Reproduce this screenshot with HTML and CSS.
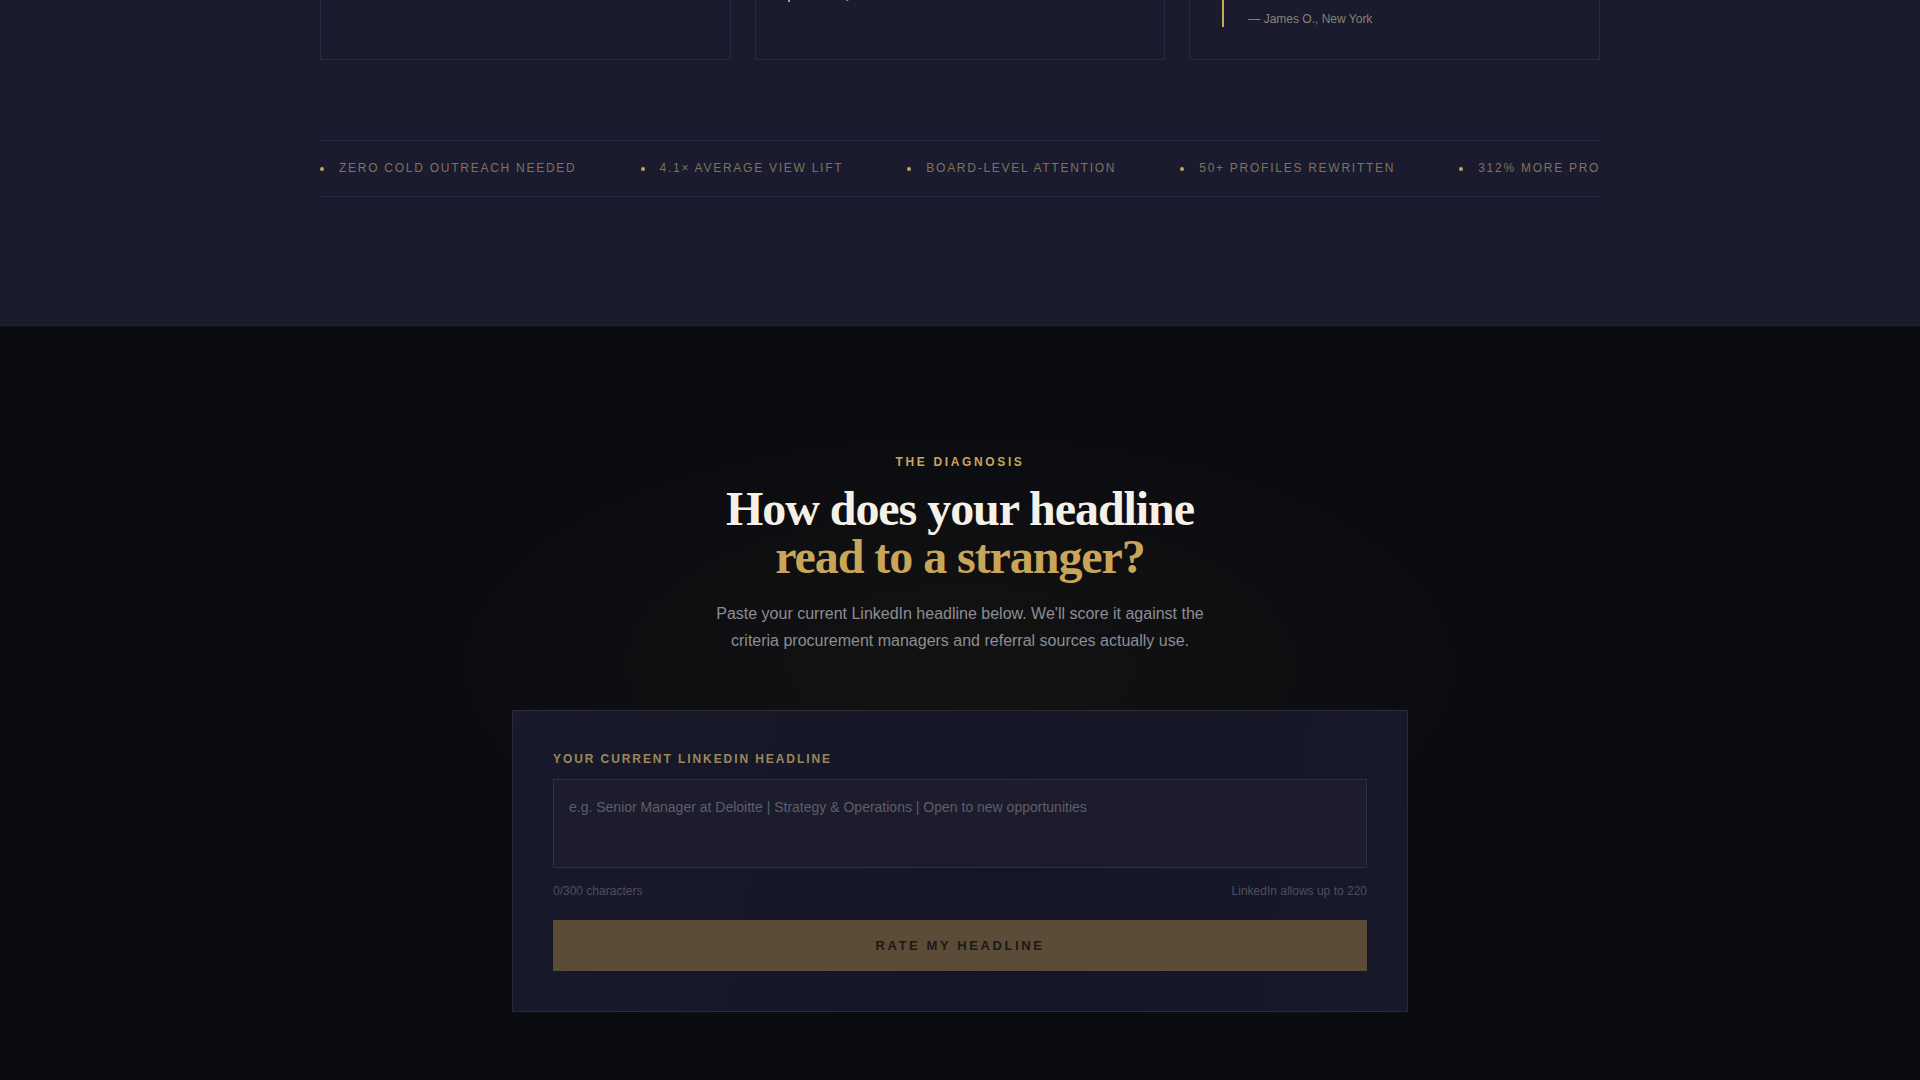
FILE: index.html
```html
<!DOCTYPE html>
<html lang="en">
<head>
<meta charset="utf-8">
<title>Headline Diagnosis</title>
<link rel="stylesheet" href="styles.css">
</head>
<body>
<section class="proof">
  <div class="container">
    <div class="cards">
      <article class="card">
        <blockquote class="quote">
          <p>Three inbound partner calls in the first<br>month. I had never had one before.</p>
          <cite>— Daniel K., Toronto</cite>
        </blockquote>
      </article>
      <article class="card">
        <blockquote class="quote">
          <p>Procurement teams finally understood<br>what I do before the first meeting.<br>That alone changed my pipeline.</p>
          <cite>— Maya R., London</cite>
        </blockquote>
      </article>
      <article class="card">
        <blockquote class="quote">
          <p>My old headline listed a job title.<br>The new one tells a stranger why<br>they should call me. Referrals<br>doubled within a quarter.</p>
          <cite>— James O., New York</cite>
        </blockquote>
      </article>
    </div>
    <div class="ticker">
      <div class="ticker-track">
        <span class="ticker-item"><span class="dot"></span>Zero cold outreach needed</span>
        <span class="ticker-item"><span class="dot"></span>4.1× average view lift</span>
        <span class="ticker-item"><span class="dot"></span>Board-level attention</span>
        <span class="ticker-item"><span class="dot"></span>50+ profiles rewritten</span>
        <span class="ticker-item"><span class="dot"></span>312% more profile visits</span>
        <span class="ticker-item"><span class="dot"></span>Zero cold outreach needed</span>
      </div>
    </div>
  </div>
</section>

<section class="diagnosis">
  <div class="diag-inner">
    <p class="eyebrow">The Diagnosis</p>
    <h2 class="diag-title">How does your headline<br><span class="gold">read to a stranger?</span></h2>
    <p class="diag-lead">Paste your current LinkedIn headline below. We'll score it against the criteria procurement managers and referral sources actually use.</p>

    <form class="diag-form">
      <label class="field-label" for="headline">Your current LinkedIn headline</label>
      <textarea id="headline" class="field-input" placeholder="e.g. Senior Manager at Deloitte | Strategy &amp; Operations | Open to new opportunities"></textarea>
      <div class="field-meta">
        <span>0/300 characters</span>
        <span>LinkedIn allows up to 220</span>
      </div>
      <button type="button" class="submit">Rate my headline</button>
    </form>
  </div>
</section>
</body>
</html>
```

FILE: styles.css
```css
* { box-sizing: border-box; }

html, body {
  margin: 0;
  padding: 0;
  background: #0b0c10;
  font-family: "Liberation Sans", Arial, sans-serif;
  overflow: hidden;
}

.proof {
  background: #1a1b2e;
  border-bottom: 1px solid #232238;
  padding-bottom: 128px;
}

.container {
  width: 1280px;
  margin: 0 auto;
}

.cards {
  display: grid;
  grid-template-columns: repeat(3, 1fr);
  gap: 24px;
  margin-top: -134px;
}

.card {
  background: #1a1b2e;
  border: 1px solid #28293e;
  padding: 32px;
}

.quote {
  margin: 0;
  border-left: 2px solid #c9a55a;
  padding-left: 24px;
}

.quote p {
  margin: 0 0 12px;
  font-family: "Liberation Serif", "Times New Roman", serif;
  font-style: italic;
  font-size: 15px;
  line-height: 25px;
  color: #d8d2c4;
}

.quote cite {
  display: block;
  font-style: normal;
  font-size: 12px;
  line-height: 16px;
  color: #8a826f;
}

.ticker {
  margin-top: 80px;
  border-top: 1px solid #25263b;
  border-bottom: 1px solid #25263b;
  padding: 19px 0;
  overflow: hidden;
}

.ticker-track {
  display: flex;
  gap: 64px;
  white-space: nowrap;
}

.ticker-item {
  display: flex;
  align-items: center;
  gap: 15px;
  flex-shrink: 0;
  font-size: 12px;
  line-height: 17px;
  letter-spacing: 0.145em;
  text-transform: uppercase;
  color: #7f735b;
}

.dot {
  width: 4px;
  height: 4px;
  border-radius: 50%;
  background: #c9a55a;
  flex-shrink: 0;
}

.diagnosis {
  background:
    radial-gradient(ellipse 520px 240px at 50% 340px, rgba(201, 165, 90, 0.045), rgba(201, 165, 90, 0) 100%),
    #0b0c10;
  padding: 128px 0 80px;
}

.diag-inner {
  display: flex;
  flex-direction: column;
  align-items: center;
  text-align: center;
}

.eyebrow {
  margin: 0;
  font-size: 12px;
  line-height: 16px;
  font-weight: 700;
  letter-spacing: 0.22em;
  text-transform: uppercase;
  color: #c9a55a;
}

.diag-title {
  margin: 15px 0 0;
  font-family: "Liberation Serif", "Times New Roman", serif;
  font-weight: 700;
  font-size: 48px;
  line-height: 48px;
  letter-spacing: -0.022em;
  color: #f6f1e7;
}

.gold { color: #c9a55a; }

.diag-lead {
  margin: 19px 0 0;
  max-width: 520px;
  font-size: 16px;
  line-height: 27px;
  color: #8d8d94;
}

.diag-form {
  margin-top: 56px;
  width: 896px;
  padding: 40px;
  border: 1px solid #2d2b36;
  background: linear-gradient(100deg, #18192b 0%, #141628 55%, #17182a 100%);
  text-align: left;
  display: flex;
  flex-direction: column;
}

.field-label {
  font-size: 12px;
  line-height: 16px;
  font-weight: 700;
  letter-spacing: 0.16em;
  text-transform: uppercase;
  color: #9d875a;
}

.field-input {
  margin-top: 12px;
  width: 100%;
  height: 89px;
  padding: 17px 15px 16px;
  background: #1c1c2d;
  border: 1px solid #2f2f3e;
  border-radius: 0;
  resize: none;
  outline: none;
  font-family: "Liberation Sans", Arial, sans-serif;
  font-size: 14px;
  line-height: 21px;
  color: #d8d2c4;
}

.field-input::placeholder {
  color: #5e5e6c;
}

.field-meta {
  margin-top: 14px;
  display: flex;
  justify-content: space-between;
  font-size: 12px;
  line-height: 18px;
  color: #4f4f5c;
}

.submit {
  margin-top: 20px;
  height: 51px;
  width: 100%;
  border: none;
  background: #5a4c37;
  font-family: "Liberation Sans", Arial, sans-serif;
  font-size: 13px;
  font-weight: 700;
  letter-spacing: 0.2em;
  text-transform: uppercase;
  color: #1c1819;
  cursor: pointer;
}
```
